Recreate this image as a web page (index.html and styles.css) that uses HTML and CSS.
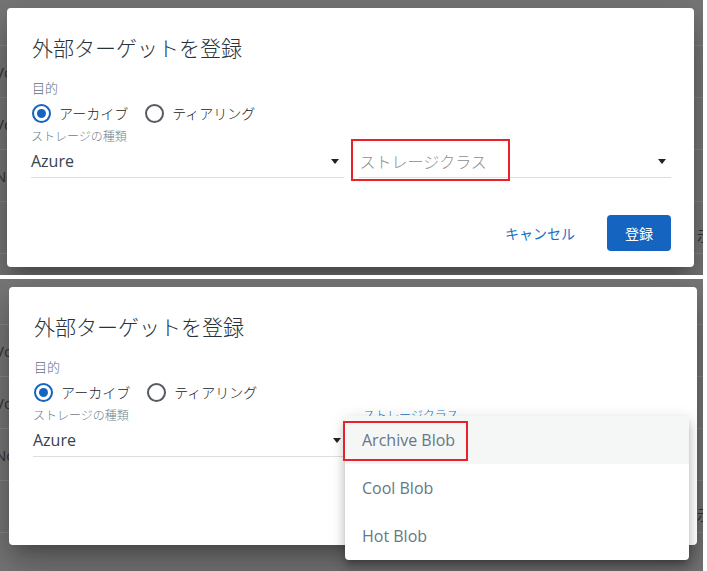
FILE: index.html
```html
<!DOCTYPE html>
<html lang="ja">
<head>
    <meta charset="utf-8">
    <title>外部ターゲットを登録</title>
    <link rel="stylesheet" href="styles.css">
</head>
<body>

    <!-- closed state -->
    <div class="shot">
        <div class="table">
            <div class="row head"></div>
            <div class="row"><span class="cell">Vol</span></div>
            <div class="row"><span class="cell">Vol</span></div>
            <div class="row"><span class="cell">No</span></div>
            <div class="row"><span class="cell"></span><span class="cell-end">示</span></div>
        </div>

        <div class="dialog">
            <h2 class="dialog-title">外部ターゲットを登録</h2>
            <div class="group-label">目的</div>
            <div class="radios">
                <label class="radio checked"><span class="radio-icon"></span>アーカイブ</label>
                <label class="radio"><span class="radio-icon"></span>ティアリング</label>
            </div>
            <div class="fields">
                <div class="field">
                    <div class="field-label">ストレージの種類</div>
                    <div class="select"><span class="value">Azure</span><span class="arrow"></span></div>
                </div>
                <div class="field">
                    <div class="field-label"></div>
                    <div class="select"><span class="placeholder">ストレージクラス</span><span class="arrow"></span></div>
                </div>
            </div>
            <div class="actions">
                <button class="btn-text">キャンセル</button>
                <button class="btn-primary">登録</button>
            </div>
        </div>

        <div class="mark mark-one"></div>
    </div>

    <!-- open state -->
    <div class="shot second">
        <div class="table">
            <div class="row head"></div>
            <div class="row"><span class="cell">Vol</span></div>
            <div class="row"><span class="cell">Vol</span></div>
            <div class="row"><span class="cell">No</span></div>
            <div class="row"><span class="cell"></span><span class="cell-end">示</span></div>
        </div>

        <div class="dialog">
            <h2 class="dialog-title">外部ターゲットを登録</h2>
            <div class="group-label">目的</div>
            <div class="radios">
                <label class="radio checked"><span class="radio-icon"></span>アーカイブ</label>
                <label class="radio"><span class="radio-icon"></span>ティアリング</label>
            </div>
            <div class="fields">
                <div class="field">
                    <div class="field-label">ストレージの種類</div>
                    <div class="select"><span class="value">Azure</span><span class="arrow"></span></div>
                </div>
                <div class="field">
                    <div class="field-label focused">ストレージクラス</div>
                    <div class="select"><span class="value"></span><span class="arrow"></span></div>
                </div>
            </div>
            <div class="actions">
                <button class="btn-text">キャンセル</button>
                <button class="btn-primary">登録</button>
            </div>
        </div>

        <ul class="menu">
            <li class="menu-item active">Archive Blob</li>
            <li class="menu-item">Cool Blob</li>
            <li class="menu-item">Hot Blob</li>
        </ul>

        <div class="mark mark-two"></div>
    </div>

</body>
</html>
```

FILE: styles.css
```css
body {
    margin: 0;
    background: #fff;
    display: flex;
    flex-direction: column;
    gap: 4px;
    font-family: "Open Sans", "Noto Sans CJK JP", sans-serif;
}

.shot {
    position: relative;
    width: 703px;
    height: 275px;
    overflow: hidden;
    background: #777;
}

.shot.second {
    height: 292px;
}

/* table behind the overlay */
.table {
    display: flex;
    flex-direction: column;
}

.row {
    height: 51px;
    border-bottom: 1px solid #868686;
    display: flex;
    align-items: center;
    justify-content: space-between;
}

.row.head {
    height: 45px;
}

.cell {
    margin-left: -5px;
    font-size: 15px;
    color: #333;
}

.cell-end {
    margin-right: -8px;
    margin-top: 14px;
    font-size: 14px;
    color: #333;
}

/* dialog */
.dialog {
    position: absolute;
    top: 8px;
    left: 7px;
    width: 687px;
    height: 259px;
    box-sizing: border-box;
    padding: 24px 23px 16px 24px;
    background: #fff;
    border-radius: 4px;
    box-shadow: 0 11px 15px -7px rgba(0, 0, 0, .25), 0 24px 38px 3px rgba(0, 0, 0, .16), 0 9px 46px 8px rgba(0, 0, 0, .12);
    display: flex;
    flex-direction: column;
}

.second .dialog {
    left: 9px;
    width: 688px;
    height: 258px;
}

.dialog-title {
    margin: 0 0 15px 1px;
    font-size: 21px;
    line-height: 32px;
    font-weight: 300;
    color: #27323b;
}

.group-label {
    margin-left: 1px;
    font-size: 13px;
    line-height: 18px;
    font-weight: 300;
    color: #5f707d;
}

.radios {
    display: flex;
    align-items: center;
    height: 24px;
    margin-top: 4px;
    margin-left: 1px;
}

.radio {
    display: flex;
    align-items: center;
    gap: 8px;
    margin-right: 17px;
    font-size: 14px;
    font-weight: 300;
    color: #222;
}

.radio-icon {
    width: 19px;
    height: 19px;
    box-sizing: border-box;
    border: 2px solid #555b61;
    border-radius: 50%;
    display: flex;
    align-items: center;
    justify-content: center;
}

.radio.checked .radio-icon {
    border-color: #1565c0;
}

.radio.checked .radio-icon::after {
    content: "";
    width: 9px;
    height: 9px;
    border-radius: 50%;
    background: #1565c0;
}

.fields {
    display: grid;
    grid-template-columns: 1fr 1fr;
    gap: 15px;
    margin-top: 4px;
}

.field-label {
    height: 16px;
    font-size: 12px;
    line-height: 16px;
    font-weight: 300;
    color: #6f808c;
}

.field-label.focused {
    color: #1a73c8;
    padding-left: 2px;
}

.select {
    height: 32px;
    border-bottom: 1px solid #dedede;
    display: flex;
    align-items: center;
    justify-content: space-between;
}

.value {
    font-size: 16px;
    color: #37424b;
}

.placeholder {
    margin-left: 1px;
    font-size: 16px;
    font-weight: 300;
    color: #8e8e8e;
}

.arrow {
    width: 0;
    height: 0;
    margin-right: 5px;
    border-left: 4px solid transparent;
    border-right: 4px solid transparent;
    border-top: 5px solid #222;
}

.actions {
    margin-top: auto;
    display: flex;
    justify-content: flex-end;
    align-items: center;
    gap: 24px;
}

.btn-text {
    border: none;
    background: none;
    padding: 0 8px;
    height: 36px;
    font-family: inherit;
    font-size: 14px;
    color: #1a6fc4;
}

.btn-primary {
    border: none;
    width: 64px;
    height: 36px;
    border-radius: 4px;
    background: #1565c0;
    color: #fff;
    font-family: inherit;
    font-size: 14px;
}

/* dropdown menu */
.menu {
    position: absolute;
    top: 137px;
    left: 345px;
    width: 344px;
    margin: 0;
    padding: 0;
    list-style: none;
    background: #fff;
    border-radius: 4px;
    box-shadow: 0 5px 5px -3px rgba(0, 0, 0, .2), 0 8px 10px 1px rgba(0, 0, 0, .14), 0 3px 14px 2px rgba(0, 0, 0, .12);
    overflow: hidden;
}

.menu-item {
    height: 48px;
    padding-left: 17px;
    display: flex;
    align-items: center;
    font-size: 16px;
    color: #667785;
}

.menu-item.active {
    background: #f5f6f6;
}

/* red annotation boxes */
.mark {
    position: absolute;
    border: 2px solid #e8212b;
    box-sizing: border-box;
}

.mark-one {
    top: 139px;
    left: 351px;
    width: 159px;
    height: 42px;
}

.mark-two {
    top: 142px;
    left: 343px;
    width: 125px;
    height: 40px;
}
```
